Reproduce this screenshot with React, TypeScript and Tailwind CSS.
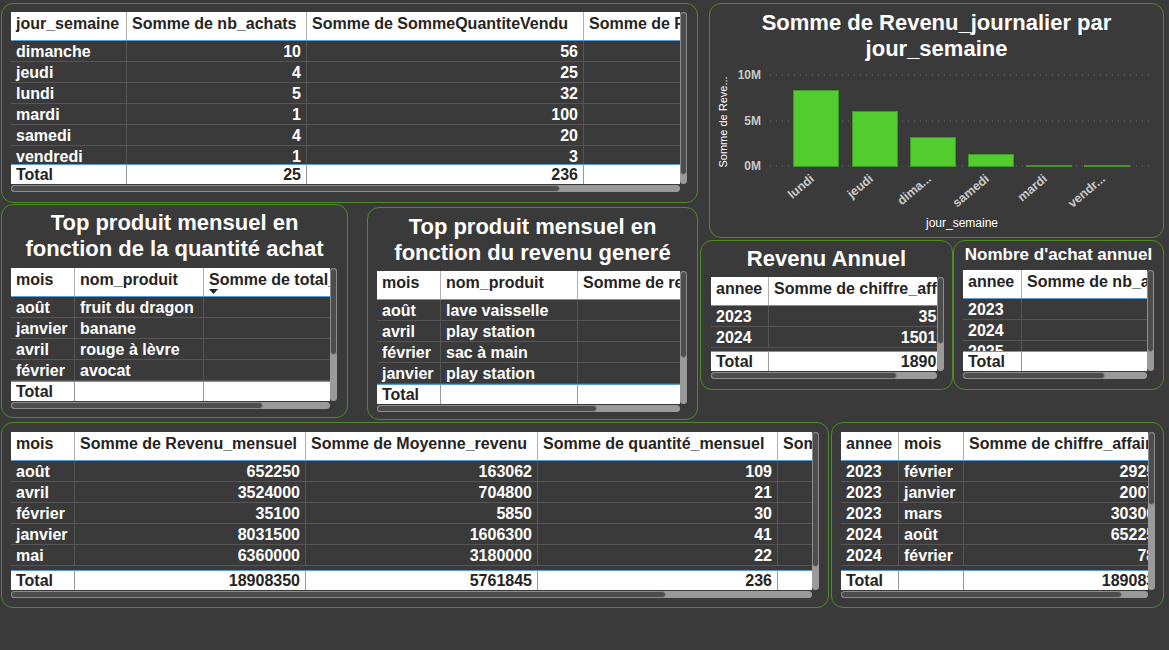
import React from 'react';

type Col = { label: string; w: string; right?: boolean; sort?: boolean };

type TableProps = {
  cols: Col[];
  rows: string[][];
  total: string[];
  width: string;
  bodyH: string;
  vH: string;
  vThumb: string;
  hThumb: string;
};

const panel = 'rounded-[12px] border border-[#4e8c22] shrink-0';

function Table({ cols, rows, total, width, bodyH, vH, vThumb, hThumb }: TableProps) {
  return (
    <div className="flex items-start">
      <div className={width}>
        <div className="overflow-hidden">
          <div className="flex h-[29px] w-max border-b border-[#5b9bd5] bg-white text-[#252423]">
            {cols.map((c, i) => (
              <div
                key={i}
                className={`${c.w} shrink-0 overflow-hidden whitespace-nowrap border-r border-[#b0b0b0] px-[5px] pt-[2px] leading-[20px]`}
              >
                {c.label}
                {c.sort && (
                  <svg width="9" height="5" viewBox="0 0 9 5" className="-mt-[1px] block">
                    <path d="M0 0h9L4.5 5z" fill="#252423" />
                  </svg>
                )}
              </div>
            ))}
          </div>
          <div className={`${bodyH} overflow-hidden`}>
            {rows.map((r, ri) => (
              <div key={ri} className="flex h-[21px] w-max border-b border-[#555555]">
                {r.map((v, ci) => (
                  <div
                    key={ci}
                    className={`${cols[ci].w} shrink-0 overflow-hidden whitespace-nowrap border-r border-[#555555] px-[5px] leading-[22px] text-white ${cols[ci].right ? 'text-right' : ''}`}
                  >
                    {v}
                  </div>
                ))}
              </div>
            ))}
          </div>
          <div className="flex h-[20px] w-max border-t border-[#5b9bd5] bg-white text-[#252423]">
            {total.map((v, ci) => (
              <div
                key={ci}
                className={`${cols[ci].w} shrink-0 overflow-hidden whitespace-nowrap border-r border-[#9a9a9a] px-[5px] leading-[20px] ${cols[ci].right ? 'text-right' : ''}`}
              >
                {v}
              </div>
            ))}
          </div>
        </div>
        <div className="mt-[1px] h-[7px] rounded-full bg-[#9a9a9a]">
          <div className={`${hThumb} h-full rounded-full border border-[#8c8c8c] bg-[#4d4d4d]`} />
        </div>
      </div>
      <div className={`${vH} w-[7px] shrink-0 rounded-full bg-[#9a9a9a]`}>
        <div className={`${vThumb} w-full rounded-full border border-[#8c8c8c] bg-[#4d4d4d]`} />
      </div>
    </div>
  );
}

const bars = [
  { name: 'lundi', x: 83, top: 31 },
  { name: 'jeudi', x: 142, top: 52 },
  { name: 'dima...', x: 200, top: 78 },
  { name: 'samedi', x: 258, top: 95 },
  { name: 'mardi', x: 316, top: 106 },
  { name: 'vendr...', x: 374, top: 106 },
];

function Chart() {
  const base = 107;
  return (
    <svg width="453" height="174" className="block" fontFamily="'Liberation Sans', Arial, sans-serif">
      <text x="17" y="63" fontSize="11" fontWeight="400" fill="#ffffff" textAnchor="middle" transform="rotate(-90 17 63)">
        Somme de Reve...
      </text>
      {[16, 62, 107].map((y) => (
        <line key={y} x1="60" x2="440" y1={y} y2={y} stroke="#6a6a6a" strokeWidth="1" strokeDasharray="1 5" />
      ))}
      <g fontSize="12" fontWeight="700" fill="#c8c8c8" textAnchor="end">
        <text x="51" y="20">10M</text>
        <text x="51" y="66">5M</text>
        <text x="51" y="111">0M</text>
      </g>
      {bars.map((b) => (
        <g key={b.name}>
          <rect x={b.x + 0.5} y={b.top + 0.5} width="45" height={Math.max(base - b.top, 1)} fill="#53cc2f" stroke="#3f9a22" strokeWidth="1" />
          <text
            x={b.x + 22}
            y="121"
            fontSize="12.5"
            fontWeight="700"
            fill="#c8c8c8"
            textAnchor="end"
            transform={`rotate(-40 ${b.x + 22} 121)`}
          >
            {b.name}
          </text>
        </g>
      ))}
      <text x="252" y="168" fontSize="12" fontWeight="400" fill="#ffffff" textAnchor="middle">
        jour_semaine
      </text>
    </svg>
  );
}

export default function App() {
  return (
    <div className="h-[650px] w-[1169px] overflow-hidden bg-[#3a3a3a] font-['Liberation_Sans',Arial,sans-serif] text-[16px] font-bold">
      <div className="flex items-start">
        <div className="w-[699px] shrink-0 pt-[3px]">
          <div className={`${panel} ml-[1px] h-[200px] w-[697px] pl-[9px] pt-[8px]`}>
            <Table
              cols={[
                { label: 'jour_semaine', w: 'w-[116px]' },
                { label: 'Somme de nb_achats', w: 'w-[180px]', right: true },
                { label: 'Somme de SommeQuantiteVendu', w: 'w-[277px]', right: true },
                { label: 'Somme de Revenu_journalier', w: 'w-[220px]', right: true },
              ]}
              rows={[
                ['dimanche', '10', '56', ''],
                ['jeudi', '4', '25', ''],
                ['lundi', '5', '32', ''],
                ['mardi', '1', '100', ''],
                ['samedi', '4', '20', ''],
                ['vendredi', '1', '3', ''],
              ]}
              total={['Total', '25', '236', '']}
              width="w-[669px]"
              bodyH="h-[123px]"
              vH="h-[172px]"
              vThumb="h-[163px]"
              hThumb="w-[549px]"
            />
          </div>
          <div className="flex items-start">
            <div className={`${panel} ml-[1px] mt-[1px] h-[214px] w-[347px] pt-[5px]`}>
              <div className="h-[52px] text-center text-[22px] leading-[26px] text-white">
                Top produit mensuel en
                <br />
                fonction de la quantité achat
              </div>
              <div className="mt-[6px] pl-[9px]">
                <Table
                  cols={[
                    { label: 'mois', w: 'w-[64px]' },
                    { label: 'nom_produit', w: 'w-[129px]' },
                    { label: 'Somme de total_achat', w: 'w-[200px]', sort: true },
                  ]}
                  rows={[
                    ['août', 'fruit du dragon', ''],
                    ['janvier', 'banane', ''],
                    ['avril', 'rouge à lèvre', ''],
                    ['février', 'avocat', ''],
                  ]}
                  total={['Total', '', '']}
                  width="w-[319px]"
                  bodyH="h-[84px]"
                  vH="h-[133px]"
                  vThumb="h-[87px]"
                  hThumb="w-[252px]"
                />
              </div>
            </div>
            <div className={`${panel} ml-[19px] mt-[4px] h-[213px] w-[331px] pt-[6px]`}>
              <div className="h-[52px] text-center text-[22px] leading-[26px] text-white">
                Top produit mensuel en
                <br />
                fonction du revenu generé
              </div>
              <div className="mt-[5px] pl-[9px]">
                <Table
                  cols={[
                    { label: 'mois', w: 'w-[64px]' },
                    { label: 'nom_produit', w: 'w-[137px]' },
                    { label: 'Somme de revenu', w: 'w-[200px]' },
                  ]}
                  rows={[
                    ['août', 'lave vaisselle', ''],
                    ['avril', 'play station', ''],
                    ['février', 'sac à main', ''],
                    ['janvier', 'play station', ''],
                  ]}
                  total={['Total', '', '']}
                  width="w-[303px]"
                  bodyH="h-[84px]"
                  vH="h-[133px]"
                  vThumb="h-[87px]"
                  hThumb="w-[220px]"
                />
              </div>
            </div>
          </div>
        </div>

        <div className="w-[470px] shrink-0 pt-[3px]">
          <div className={`${panel} ml-[10px] h-[235px] w-[455px] pt-[6px]`}>
            <div className="h-[49px] text-center text-[22px] leading-[26px] text-white">
              Somme de Revenu_journalier par
              <br />
              jour_semaine
            </div>
            <Chart />
          </div>
          <div className="mt-[2px] flex items-start">
            <div className={`${panel} ml-[1px] h-[150px] w-[253px] pl-[10px] pt-[5px]`}>
              <div className="h-[26px] pr-[10px] text-center text-[22px] leading-[26px] text-white">Revenu Annuel</div>
              <div className="mt-[5px]">
                <Table
                  cols={[
                    { label: 'annee', w: 'w-[58px]' },
                    { label: 'Somme de chiffre_affaire', w: 'w-[209px]', right: true },
                  ]}
                  rows={[
                    ['2023', '355200'],
                    ['2024', '15010150'],
                  ]}
                  total={['Total', '18908350']}
                  width="w-[226px]"
                  bodyH="h-[45px]"
                  vH="h-[94px]"
                  vThumb="h-[67px]"
                  hThumb="w-[186px]"
                />
              </div>
            </div>
            <div className={`${panel} h-[150px] w-[211px] pl-[9px] pt-[4px]`}>
              <div className="h-[20px] pr-[9px] text-center text-[17px] leading-[20px] text-white">
                Nombre d'achat annuel
              </div>
              <div className="mt-[5px]">
                <Table
                  cols={[
                    { label: 'annee', w: 'w-[59px]' },
                    { label: 'Somme de nb_achats', w: 'w-[200px]', right: true },
                  ]}
                  rows={[
                    ['2023', ''],
                    ['2024', ''],
                    ['2025', ''],
                  ]}
                  total={['Total', '']}
                  width="w-[184px]"
                  bodyH="h-[52px]"
                  vH="h-[101px]"
                  vThumb="h-[82px]"
                  hThumb="w-[142px]"
                />
              </div>
            </div>
          </div>
        </div>
      </div>

      <div className="mt-[2px] flex items-start">
        <div className={`${panel} ml-[1px] h-[186px] w-[828px] pl-[9px] pt-[9px]`}>
          <Table
            cols={[
              { label: 'mois', w: 'w-[64px]' },
              { label: 'Somme de Revenu_mensuel', w: 'w-[231px]', right: true },
              { label: 'Somme de Moyenne_revenu', w: 'w-[232px]', right: true },
              { label: 'Somme de quantité_mensuel', w: 'w-[240px]', right: true },
              { label: 'Somme de nb_achats', w: 'w-[200px]', right: true },
            ]}
            rows={[
              ['août', '652250', '163062', '109', ''],
              ['avril', '3524000', '704800', '21', ''],
              ['février', '35100', '5850', '30', ''],
              ['janvier', '8031500', '1606300', '41', ''],
              ['mai', '6360000', '3180000', '22', ''],
            ]}
            total={['Total', '18908350', '5761845', '236', '']}
            width="w-[801px]"
            bodyH="h-[109px]"
            vH="h-[158px]"
            vThumb="h-[135px]"
            hThumb="w-[655px]"
          />
        </div>
        <div className={`${panel} ml-[2px] h-[186px] w-[333px] pl-[9px] pt-[9px]`}>
          <Table
            cols={[
              { label: 'annee', w: 'w-[58px]' },
              { label: 'mois', w: 'w-[65px]' },
              { label: 'Somme de chiffre_affaire', w: 'w-[215px]', right: true },
            ]}
            rows={[
              ['2023', 'février', '292500'],
              ['2023', 'janvier', '200700'],
              ['2023', 'mars', '3030000'],
              ['2024', 'août', '6522500'],
              ['2024', 'février', '7800'],
            ]}
            total={['Total', '', '18908350']}
            width="w-[307px]"
            bodyH="h-[109px]"
            vH="h-[158px]"
            vThumb="h-[73px]"
            hThumb="w-[281px]"
          />
        </div>
      </div>
    </div>
  );
}
